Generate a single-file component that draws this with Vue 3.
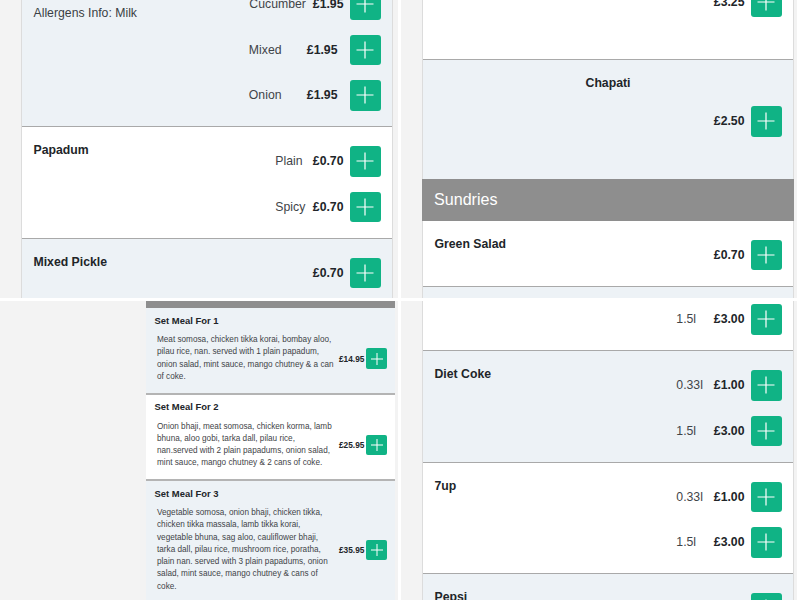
<script setup>
const topLeft = [
  { tone: 'tint', cut: true, note: 'Allergens Info: Milk', opts: [
    { label: 'Cucumber', price: '£1.95', size: 'lg' },
    { label: 'Mixed', price: '£1.95', size: 'md' },
    { label: 'Onion', price: '£1.95', size: 'md' }
  ] },
  { tone: 'plain', name: 'Papadum', opts: [
    { label: 'Plain', price: '£0.70', size: 'sm' },
    { label: 'Spicy', price: '£0.70', size: 'sm' }
  ] },
  { tone: 'tint', name: 'Mixed Pickle', opts: [{ price: '£0.70' }] }
]
const bottomRight = [
  { tone: 'plain', lead: true, opts: [{ label: '1.5l', price: '£3.00', size: 'sm' }] },
  { tone: 'tint', name: 'Diet Coke', opts: [
    { label: '0.33l', price: '£1.00', size: 'sm' },
    { label: '1.5l', price: '£3.00', size: 'sm' }
  ] },
  { tone: 'plain', name: '7up', opts: [
    { label: '0.33l', price: '£1.00', size: 'sm' },
    { label: '1.5l', price: '£3.00', size: 'sm' }
  ] },
  { tone: 'tint', name: 'Pepsi', opts: [{ price: '' }] }
]
const meals = [
  { tone: 'tint', name: 'Set Meal For 1', price: '£14.95', text: 'Meat somosa, chicken tikka korai, bombay aloo, pilau rice, nan. served with 1 plain papadum, onion salad, mint sauce, mango chutney & a can of coke.' },
  { tone: 'plain', name: 'Set Meal For 2', price: '£25.95', text: 'Onion bhaji, meat somosa, chicken korma, lamb bhuna, aloo gobi, tarka dall, pilau rice, nan.served with 2 plain papadums, onion salad, mint sauce, mango chutney & 2 cans of coke.' },
  { tone: 'tint', name: 'Set Meal For 3', price: '£35.95', text: 'Vegetable somosa, onion bhaji, chicken tikka, chicken tikka massala, lamb tikka korai, vegetable bhuna, sag aloo, cauliflower bhaji, tarka dall, pilau rice, mushroom rice, poratha, plain nan. served with 3 plain papadums, onion salad, mint sauce, mango chutney & cans of coke.' }
]
</script>

<template>
  <div class="sheet">
    <section class="panel">
      <div class="card">
        <div v-for="(row, i) in topLeft" :key="i" class="row" :class="[row.tone, { cut: row.cut }]">
          <div class="info">
            <div v-if="row.name" class="name">{{ row.name }}</div>
            <div v-if="row.note" class="note">{{ row.note }}</div>
          </div>
          <div class="opts">
            <div v-for="opt in row.opts" :key="opt.label || opt.price" class="opt">
              <span v-if="opt.label" class="label" :class="opt.size">{{ opt.label }}</span>
              <span class="price" :class="{ wide: opt.size === 'md' }">{{ opt.price }}</span>
              <button class="add"><svg viewBox="0 0 30 30" width="30" height="30"><path d="M6.500 15H23.500M15 6.500V23.500" stroke="#fff" stroke-width="1.200" fill="none" /></svg></button>
            </div>
          </div>
        </div>
      </div>
    </section>

    <section class="panel">
      <div class="card">
        <div class="stack plain first">
          <div class="opt">
            <span class="price">£3.25</span>
            <button class="add"><svg viewBox="0 0 30 30" width="30" height="30"><path d="M6.500 15H23.500M15 6.500V23.500" stroke="#fff" stroke-width="1.200" fill="none" /></svg></button>
          </div>
        </div>
        <div class="stack tint titled">
          <div class="name center">Chapati</div>
          <div class="opt">
            <span class="price">£2.50</span>
            <button class="add"><svg viewBox="0 0 30 30" width="30" height="30"><path d="M6.500 15H23.500M15 6.500V23.500" stroke="#fff" stroke-width="1.200" fill="none" /></svg></button>
          </div>
        </div>
        <h2 class="heading">Sundries</h2>
        <div class="row plain">
          <div class="info"><div class="name">Green Salad</div></div>
          <div class="opts">
            <div class="opt">
              <span class="price">£0.70</span>
              <button class="add"><svg viewBox="0 0 30 30" width="30" height="30"><path d="M6.500 15H23.500M15 6.500V23.500" stroke="#fff" stroke-width="1.200" fill="none" /></svg></button>
            </div>
          </div>
        </div>
        <div class="row tint filler"></div>
      </div>
    </section>

    <section class="panel">
      <div class="meals">
        <div class="meals-bar"></div>
        <div v-for="meal in meals" :key="meal.name" class="meal" :class="meal.tone">
          <div class="meal-name">{{ meal.name }}</div>
          <div class="meal-body">
            <p class="meal-text">{{ meal.text }}</p>
            <span class="meal-price">{{ meal.price }}</span>
            <button class="add small"><svg viewBox="0 0 20 20" width="20" height="20"><path d="M4 10H16M10 4V16" stroke="#fff" stroke-width="1" fill="none" /></svg></button>
          </div>
        </div>
      </div>
    </section>

    <section class="panel">
      <div class="card">
        <div v-for="(row, i) in bottomRight" :key="i" class="row" :class="[row.tone, { lead: row.lead }]">
          <div class="info"><div v-if="row.name" class="name">{{ row.name }}</div></div>
          <div class="opts">
            <div v-for="opt in row.opts" :key="opt.label || 'x'" class="opt">
              <span v-if="opt.label" class="label" :class="opt.size">{{ opt.label }}</span>
              <span v-if="opt.price" class="price">{{ opt.price }}</span>
              <button class="add"><svg viewBox="0 0 30 30" width="30" height="30"><path d="M6.500 15H23.500M15 6.500V23.500" stroke="#fff" stroke-width="1.200" fill="none" /></svg></button>
            </div>
          </div>
        </div>
      </div>
    </section>
  </div>
</template>

<style>
html, body { margin: 0; background: #fff; }
</style>

<style scoped>
.sheet {
  width: 800px;
  height: 600px;
  display: grid;
  grid-template-columns: 398px 396px;
  grid-template-rows: 298px 299px;
  column-gap: 3px;
  row-gap: 3px;
  overflow: hidden;
  font-family: "Liberation Sans", Arial, sans-serif;
  color: #212529;
}
.panel { background: #f3f3f3; overflow: hidden; min-width: 0; }
.card {
  margin-left: 21px;
  width: 372px;
  box-sizing: border-box;
  border-left: 1px solid #dcdcdc;
  border-right: 1px solid #dcdcdc;
}
.plain { background: #fff; }
.tint { background: #edf2f6; }
.row {
  display: flex;
  justify-content: space-between;
  box-sizing: border-box;
  padding: 13px 11.500px 15.500px;
  border-bottom: 1.500px solid #a9a9a9;
}
.row.cut { margin-top: -30px; }
.row.cut .info { padding-top: 21px; }
.row.lead { padding-top: 0; margin-top: -3px; }
.row:last-child { border-bottom: 0; }
.row.filler { height: 20px; padding: 0; }
.info { padding-top: 1px; }
.name { font-size: 12.250px; font-weight: 700; line-height: 18px; }
.name.center { text-align: center; }
.note { font-size: 12.250px; line-height: 18px; color: #3a3f44; }
.opts { display: flex; flex-direction: column; gap: 15px; padding-top: 6px; }
.opt { display: flex; align-items: center; justify-content: flex-end; height: 30.500px; }
.label { font-size: 12.250px; color: #3f4448; box-sizing: border-box; }
.label.sm { width: 37.500px; }
.label.md { width: 58px; }
.label.lg { width: 63.500px; }
.price { font-size: 12.250px; font-weight: 700; margin-right: 6.500px; }
.price.wide { margin-right: 12.500px; }
.add {
  width: 30.500px;
  height: 30.500px;
  padding: 0;
  border: 0;
  border-radius: 3px;
  background: #10b385;
  display: flex;
  align-items: center;
  justify-content: center;
  flex: none;
}
.add svg { display: block; }
.stack { padding: 0 11.500px; box-sizing: border-box; border-bottom: 1px solid #a9a9a9; }
.stack.first { margin-top: -13.500px; padding-bottom: 42px; }
.stack.titled { border-bottom: 0; padding-top: 14px; padding-bottom: 42px; }
.stack.titled .opt { margin-top: 14px; }
.heading {
  margin: 0 -1px;
  height: 42px;
  line-height: 40px;
  padding-left: 12px;
  background: #8e8e8e;
  color: #fff;
  font-size: 16.100px;
  font-weight: 400;
}
.meals {
  margin-left: 146px;
  width: 249px;
}
.meals-bar { height: 7px; background: #8e8e8e; }
.meal {
  padding: 5.500px 8.500px 9.500px;
  border-bottom: 2px solid #b4b4b4;
  box-sizing: border-box;
}
.meal-name { font-size: 9.450px; font-weight: 700; line-height: 13px; }
.meal-body { display: flex; align-items: center; padding-left: 2.500px; margin-top: 7.500px; }
.meal-text {
  margin: 0;
  width: 179px;
  margin-right: 3px;
  font-size: 8.200px;
  line-height: 12.250px;
  color: #3f4448;
  flex: none;
}
.meal-price { font-size: 8.300px; font-weight: 700; margin-right: 2px; white-space: nowrap; }
.add.small { width: 20.500px; height: 20.500px; border-radius: 2px; }
</style>
